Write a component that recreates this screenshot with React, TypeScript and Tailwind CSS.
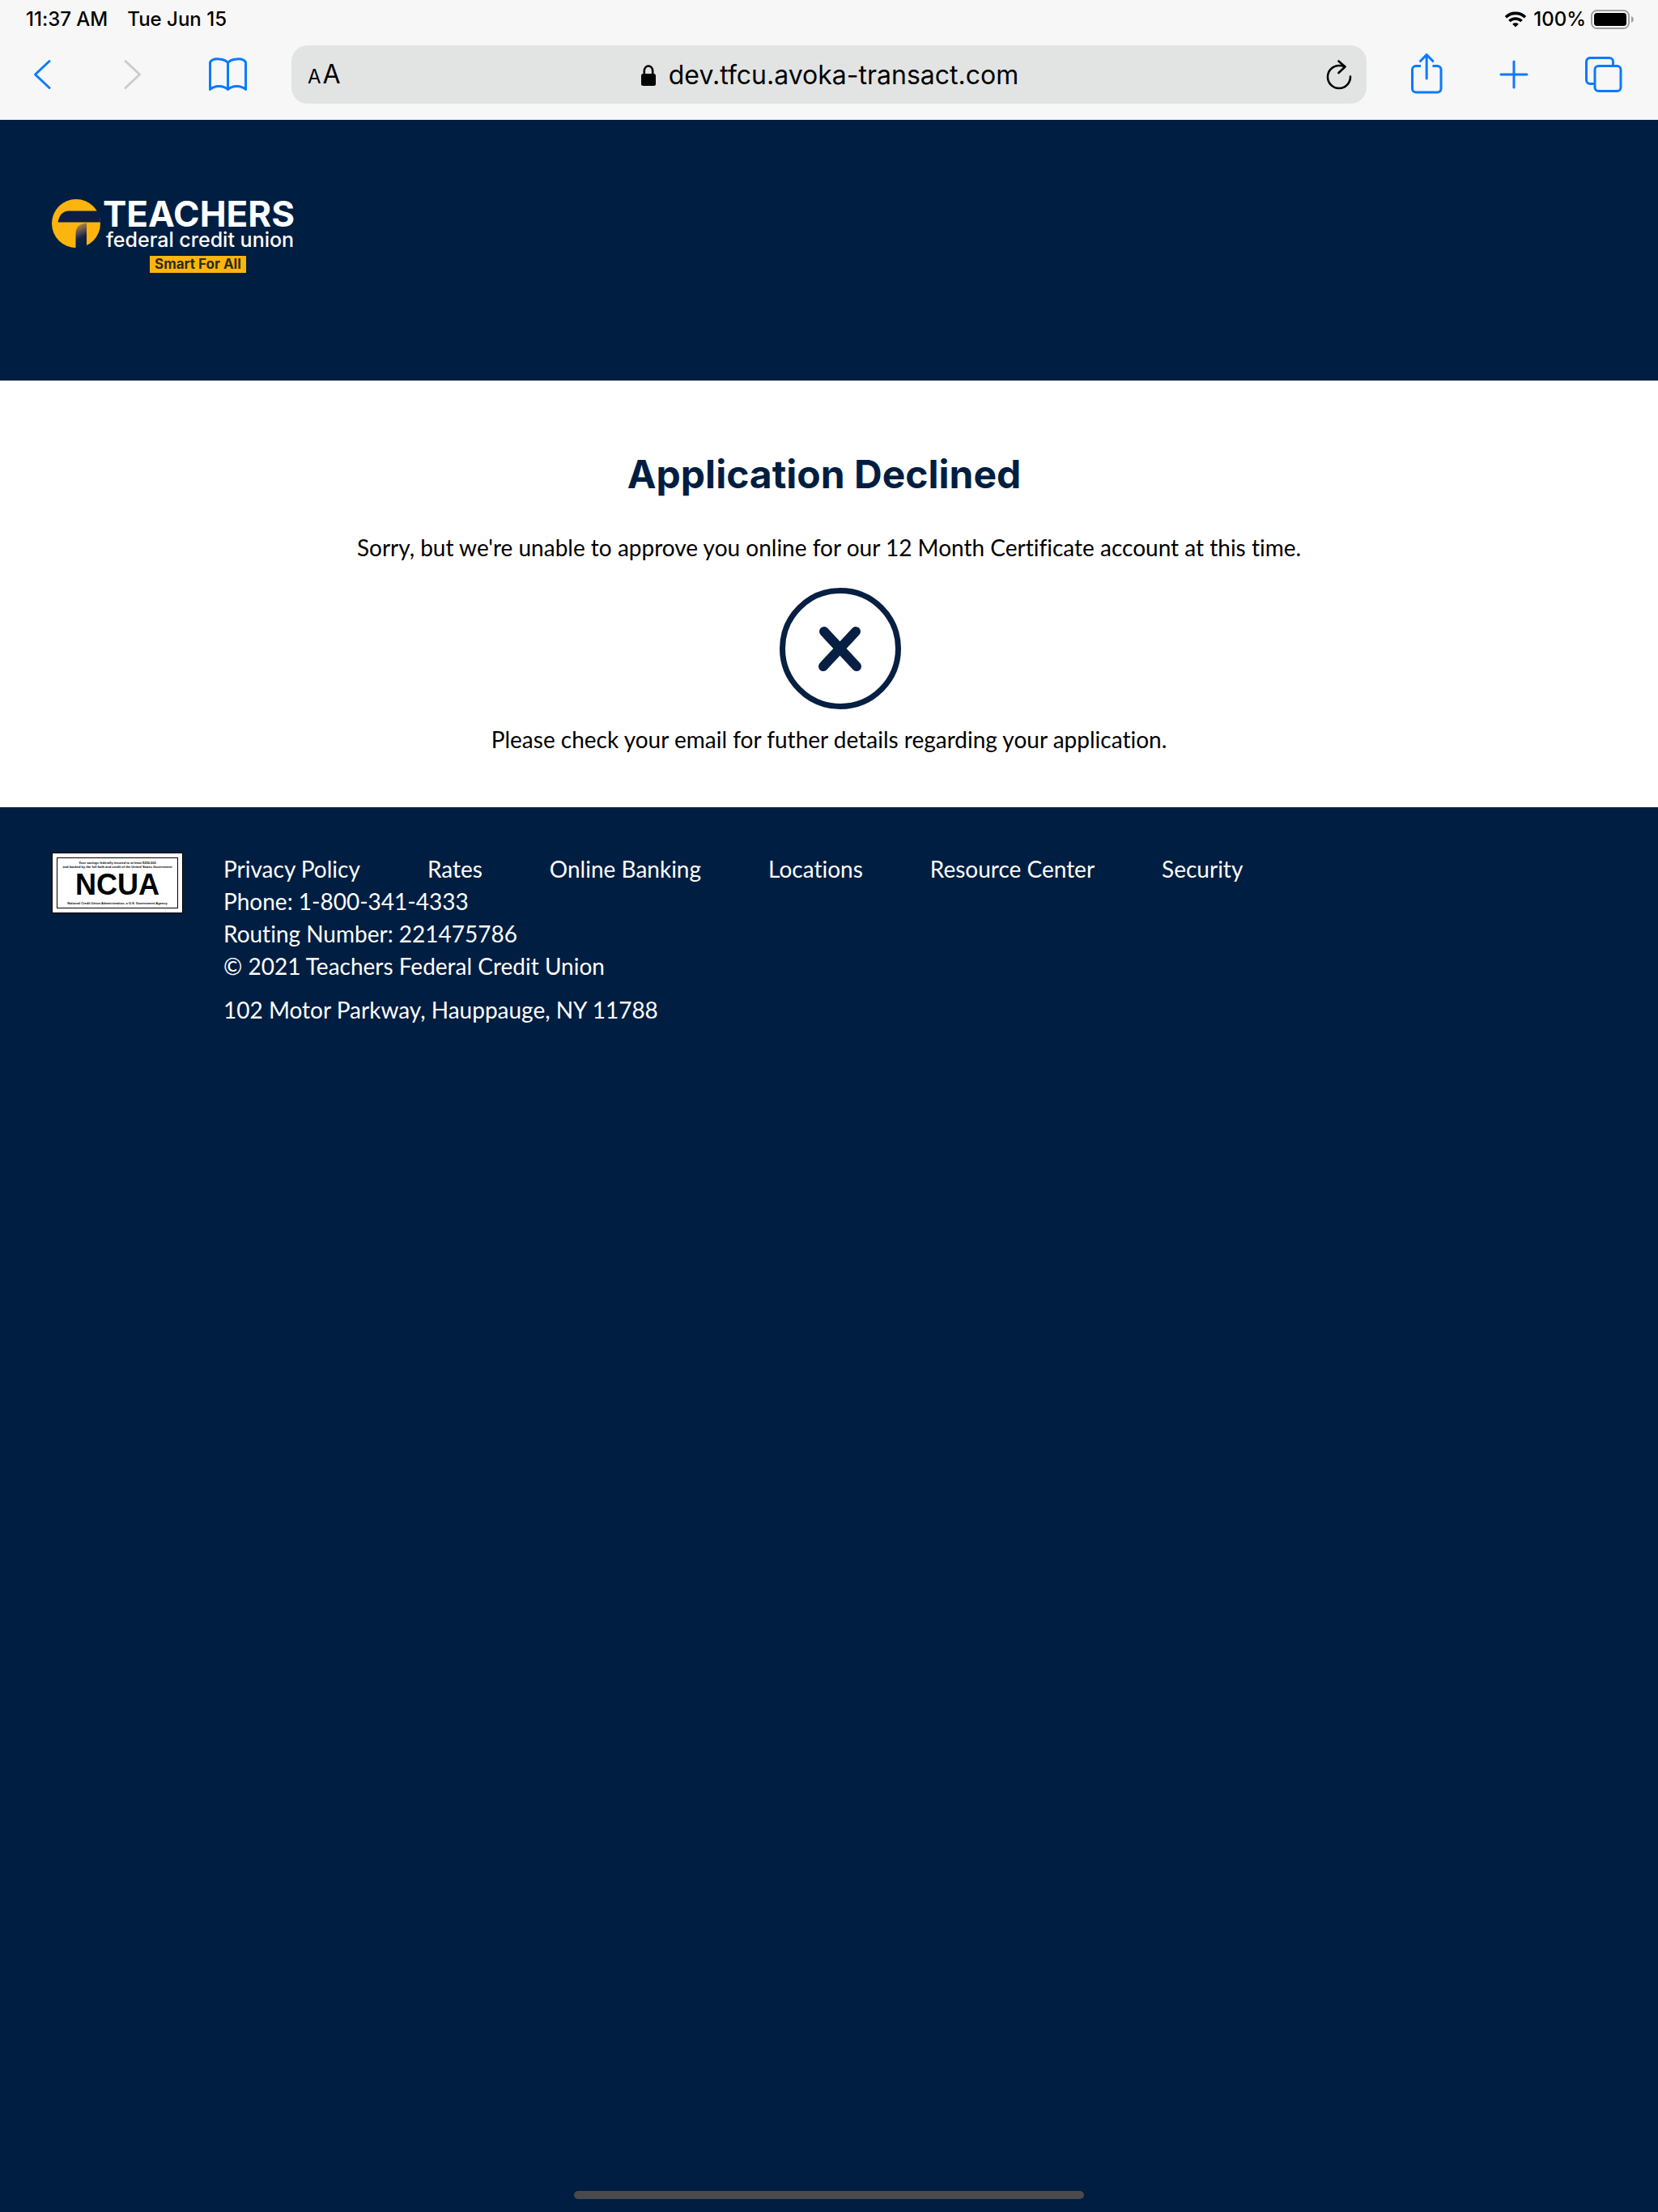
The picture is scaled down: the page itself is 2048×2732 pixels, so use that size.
import type { ReactNode } from "react";

const links = [
  "Privacy Policy",
  "Rates",
  "Online Banking",
  "Locations",
  "Resource Center",
  "Security",
];

function ToolButton({
  label,
  className = "",
  disabled = false,
  children,
}: {
  label: string;
  className?: string;
  disabled?: boolean;
  children: ReactNode;
}) {
  return (
    <button type="button" aria-label={label} disabled={disabled} className={`shrink-0 ${className}`}>
      {children}
    </button>
  );
}

function StatusBar() {
  return (
    <div className="flex h-12 items-center justify-between pr-[30px] pl-8 text-[24px] leading-7 font-medium text-black">
      <div className="flex gap-6">
        <span>11:37 AM</span>
        <span>Tue Jun 15</span>
      </div>
      <div className="flex items-center gap-2">
        <svg width="28" height="20" viewBox="0 0 28 20" aria-label="Wi-Fi">
          <path d="M2 7.2a17.4 17.4 0 0 1 24 0" fill="none" stroke="#000" strokeWidth="3.6" />
          <path d="M6.4 12a11 11 0 0 1 15.2 0" fill="none" stroke="#000" strokeWidth="3.6" />
          <path d="M14 19.6 10.2 15.8a5.6 5.6 0 0 1 7.6 0z" fill="#000" />
        </svg>
        <div className="flex items-center gap-1.5">
          <span>100%</span>
          <svg width="53" height="24" viewBox="0 0 53 24" aria-label="Battery full">
            <rect x="1" y="1" width="46" height="22" rx="6.5" fill="none" stroke="#a0a0a0" strokeWidth="2" />
            <rect x="4" y="4" width="40" height="16" rx="3.5" fill="#000" />
            <path d="M50 8c3.8 1.2 3.8 6.8 0 8z" fill="#a0a0a0" />
          </svg>
        </div>
      </div>
    </div>
  );
}

function Toolbar() {
  return (
    <div className="flex h-[100px] items-start pt-2 pr-11 pl-10">
      <div className="flex h-[72px] w-80 shrink-0 items-center text-[#0a7aff]">
        <ToolButton label="Back">
          <svg width="24" height="40" viewBox="0 0 24 40" fill="none" stroke="currentColor" strokeWidth="3" strokeLinecap="round" strokeLinejoin="round">
            <path d="M21 3.5 3.5 20 21 36.5" />
          </svg>
        </ToolButton>
        <ToolButton label="Forward" disabled className="ml-[88px] text-[#cccccc]">
          <svg width="24" height="40" viewBox="0 0 24 40" fill="none" stroke="currentColor" strokeWidth="3" strokeLinecap="round" strokeLinejoin="round">
            <path d="M3 3.5 20.5 20 3 36.5" />
          </svg>
        </ToolButton>
        <ToolButton label="Bookmarks" className="ml-[81px]">
          <svg width="49" height="44" viewBox="0 0 49 44" fill="none" stroke="currentColor" strokeWidth="3" strokeLinejoin="round">
            <path d="M24.5 7.5C21 2.5 6 0.5 2.5 7V40.5C8 35 19 35 24.5 40.5C30 35 41 35 46.5 40.5V7C43 0.5 28 2.5 24.5 7.5V40" />
          </svg>
        </ToolButton>
      </div>

      <div className="flex h-[72px] min-w-0 flex-1 items-center justify-between rounded-[20px] bg-[#e2e4e3] pt-0.5 pr-[18px] pl-5 text-black">
        <button type="button" aria-label="Page settings" className="flex w-20 items-baseline gap-0.5 leading-10">
          <span className="text-[24px]">A</span>
          <span className="text-[32px]">A</span>
        </button>
        <div className="flex items-center gap-4">
          <svg width="18" height="28" viewBox="0 0 18 28" aria-label="Secure">
            <path d="M3.8 13V8.5a5.2 6 0 0 1 10.4 0V13" fill="none" stroke="#000" strokeWidth="2.6" />
            <rect y="12" width="18" height="15" rx="2.5" fill="#000" />
          </svg>
          <span className="text-[32px] leading-10">dev.tfcu.avoka-transact.com</span>
        </div>
        <div className="flex w-20 justify-end">
          <ToolButton label="Reload">
            <svg width="32" height="38" viewBox="0 0 32 38" fill="none" stroke="#000" strokeWidth="2.6" strokeLinecap="round" strokeLinejoin="round">
              <path d="M30 20.5a14 14 0 1 1-14-13.5q3.5 0 7 1" />
              <path d="M15.5 1.5 23.5 8.5 15.5 16" />
            </svg>
          </ToolButton>
        </div>
      </div>

      <div className="flex h-[72px] w-[316px] shrink-0 items-center justify-between pl-[54px] text-[#0a7aff]">
        <ToolButton label="Share">
          <svg width="40" height="52" viewBox="0 0 40 52" fill="none" stroke="currentColor" strokeWidth="3" strokeLinecap="round" strokeLinejoin="round">
            <path d="M13 15.5H7a4.5 4.5 0 0 0-4.5 4.5V43.5A4.5 4.5 0 0 0 7 48H33.5A4.5 4.5 0 0 0 38 43.5V20a4.5 4.5 0 0 0-4.5-4.5H27.5" strokeLinecap="butt" />
            <path d="M20.2 31V2M12.5 9.5l7.7-8 7.7 8" />
          </svg>
        </ToolButton>
        <ToolButton label="New tab">
          <svg width="36" height="36" viewBox="0 0 36 36" fill="none" stroke="currentColor" strokeWidth="3" strokeLinecap="round">
            <path d="M18 2v32M2 18h32" />
          </svg>
        </ToolButton>
        <ToolButton label="Tabs">
          <svg width="46" height="44" viewBox="0 0 46 44" fill="none" stroke="currentColor" strokeWidth="3">
            <rect x="12" y="11.5" width="32" height="31" rx="4.5" />
            <path d="M34.5 11V6A4.5 4.5 0 0 0 30 1.5H6A4.5 4.5 0 0 0 1.5 6V29A4.5 4.5 0 0 0 6 33.5H11.5" />
          </svg>
        </ToolButton>
      </div>
    </div>
  );
}

function Logo() {
  return (
    <a href="#" aria-label="Teachers Federal Credit Union, Smart For All" className="flex w-[302px] gap-[3px]">
      <svg width="60" height="62" viewBox="0 0 60 62" className="shrink-0">
        <defs>
          <linearGradient id="stem" x1="0.3" y1="0" x2="0.5" y2="1">
            <stop offset="0" stopColor="#c08a3c" />
            <stop offset="0.2" stopColor="#8b6d4c" />
            <stop offset="0.6" stopColor="#12214a" />
            <stop offset="1" stopColor="#001e41" />
          </linearGradient>
        </defs>
        <circle cx="30" cy="30" r="30" fill="#fdb50d" />
        <path d="M7.5 28.5C9 20 13.5 14.5 21 14.5H58L60 28.5Z" fill="#0e1d46" />
        <path d="M29.5 60V42C29.5 35 34 30 43 29.5V57.5Q37 61 29.5 60Z" fill="url(#stem)" />
      </svg>
      <span className="flex flex-1 flex-col text-white">
        <span className="text-[44px] leading-9 font-bold">TEACHERS</span>
        <span className="pl-1 text-[25px] leading-7 font-medium whitespace-nowrap">federal credit union</span>
        <span className="mt-1.5 ml-[58px] self-start bg-[#fdb50d] px-1.5 text-[17px] leading-[21px] font-bold whitespace-nowrap text-[#2b2a22]">
          Smart For All
        </span>
      </span>
    </a>
  );
}

function NcuaBadge() {
  return (
    <div className="h-[75px] w-[162px] shrink-0 border border-black bg-white p-[5px] text-black">
      <div className="flex h-full flex-col items-center justify-between border border-black py-[3px] font-['Liberation_Sans',sans-serif] text-[4px] leading-[5px] font-bold whitespace-nowrap">
        <span className="text-center">
          Your savings federally insured to at least $250,000
          <br />
          and backed by the full faith and credit of the United States Government
        </span>
        <span className="text-[36px] leading-10">NCUA</span>
        <span>National Credit Union Administration, a U.S. Government Agency</span>
      </div>
    </div>
  );
}

export default function App() {
  return (
    <div className="flex min-h-screen flex-col bg-[#001e41] font-['Lato',sans-serif] text-[28px] leading-10 [font-variant-ligatures:none]">
      <div className="bg-[#f7f7f7] font-['Inter',sans-serif]">
        <StatusBar />
        <Toolbar />
      </div>

      <header className="h-[322px] px-16 pt-[98px] font-['Inter',sans-serif]">
        <Logo />
      </header>

      <main className="flex flex-col items-center bg-white pt-[88px] pb-16 text-center text-black">
        <h1 className="pr-3 font-['Inter',sans-serif] text-[48px] leading-[56px] font-bold text-[#001e41]">
          Application Declined
        </h1>
        <p className="mt-[42px]">
          Sorry, but we're unable to approve you online for our 12 Month Certificate account at this time.
        </p>
        <svg width="150" height="150" viewBox="0 0 150 150" className="mt-[30px] ml-7" aria-label="Declined">
          <circle cx="75" cy="75" r="71.5" fill="none" stroke="#061f42" strokeWidth="7" />
          <path d="M55 54 95 97M94 54 54 97" fill="none" stroke="#061f42" strokeWidth="12" strokeLinecap="round" />
        </svg>
        <p className="mt-[17px]">Please check your email for futher details regarding your application.</p>
      </main>

      <footer className="flex items-start gap-[50px] px-16 pt-14 text-white">
        <NcuaBadge />
        <div>
          <nav aria-label="Footer" className="flex gap-[83px]">
            {links.map((l) => (
              <a key={l} href="#">
                {l}
              </a>
            ))}
          </nav>
          <p>Phone: 1-800-341-4333</p>
          <p>Routing Number: 221475786</p>
          <p>© 2021 Teachers Federal Credit Union</p>
          <p className="mt-3.5">102 Motor Parkway, Hauppauge, NY 11788</p>
        </div>
      </footer>

      <div className="mx-auto mt-auto mb-4 h-2.5 w-[630px] rounded-full bg-[#4a4a4a]" />
    </div>
  );
}
